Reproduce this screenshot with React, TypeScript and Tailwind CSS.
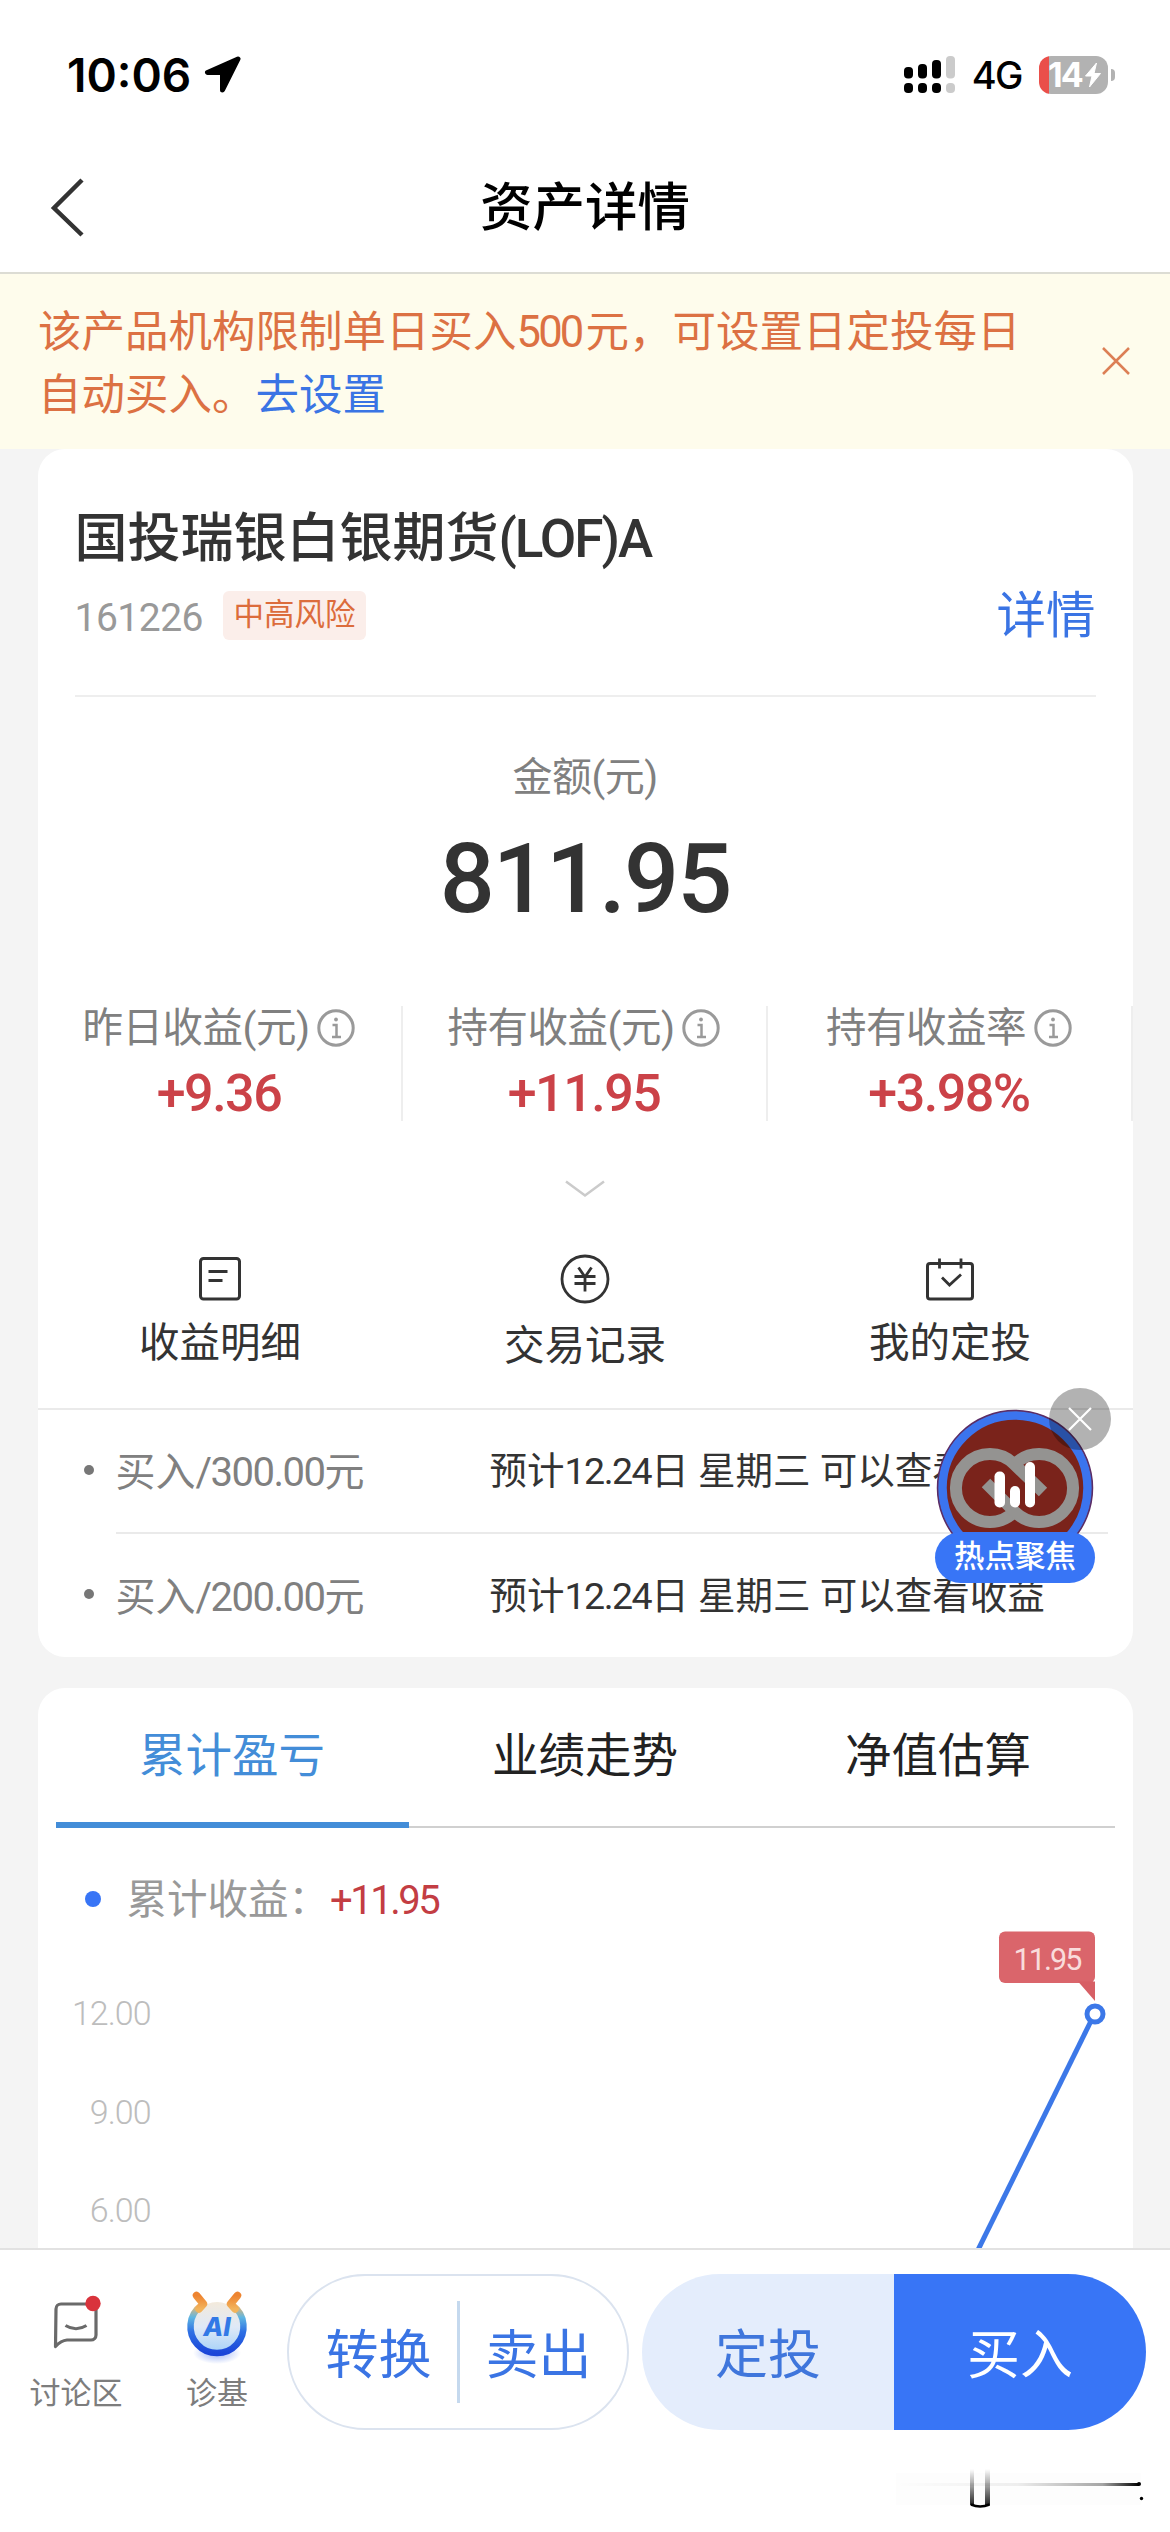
import React from 'react';

const stats = [
  { label: '昨日收益(元)', value: '+9.36' },
  { label: '持有收益(元)', value: '+11.95' },
  { label: '持有收益率', value: '+3.98%' },
];

const orders = [
  { amount: '300.00', date: '12.24' },
  { amount: '200.00', date: '12.24' },
];

const tabs = ['累计盈亏', '业绩走势', '净值估算'];

const LocationIcon = () => (
  <svg width="38" height="38" viewBox="0 0 38 38" className="ml-[13px]">
    <path d="M34 3 L3.500 16.500 H18.500 V34 Z" fill="#000" stroke="#000" strokeWidth="5" strokeLinejoin="round" />
  </svg>
);

const SignalIcon = () => (
  <svg width="52" height="38" viewBox="0 0 52 38">
    <rect x="0" y="11" width="9" height="11.500" rx="4" />
    <rect x="14" y="8" width="9" height="14.500" rx="4" />
    <rect x="28" y="4" width="9" height="18.500" rx="4" />
    <rect x="42" y="0" width="9" height="22.500" rx="4" fill="#cbcbcb" />
    <rect x="0" y="27" width="9" height="10" rx="4" />
    <rect x="14" y="27" width="9" height="10" rx="4" />
    <rect x="28" y="27" width="9" height="10" rx="4" />
    <rect x="42" y="27" width="9" height="10" rx="4" fill="#cbcbcb" />
  </svg>
);

const Battery = () => (
  <div className="flex items-center">
    <div className="relative flex h-[38px] w-[69px] items-center rounded-[12px] bg-[linear-gradient(to_right,#ea4f4a_10px,#b2b2b2_10px)] pl-[9px]">
      <span className="text-[34px] leading-[38px] font-bold tracking-[-2px] text-white">14</span>
      <svg width="18" height="26" viewBox="0 0 18 26" className="ml-[2px] shrink-0">
        <path d="M12.500 1 L1.500 14 H8 L5.500 25 L16.500 11.500 H10 Z" fill="#fff" stroke="#fff" strokeWidth="1" strokeLinejoin="round" />
      </svg>
    </div>
    <span className="ml-[3px] h-[12px] w-[4px] rounded-r-full bg-[#b2b2b2]" />
  </div>
);

const InfoIcon = () => (
  <svg width="38" height="38" viewBox="0 0 38 38" fill="none" stroke="#9a9a9a">
    <circle cx="19" cy="19" r="17.200" strokeWidth="3" />
    <path d="M15.500 16 H19.500 V27.500 M15 28 H24" strokeWidth="2.500" />
    <circle cx="19" cy="10.500" r="1.900" fill="#9a9a9a" stroke="none" />
  </svg>
);

const DetailIcon = () => (
  <svg width="50" height="50" viewBox="0 0 50 50" fill="none" stroke="#333" strokeWidth="3">
    <rect x="5.500" y="4.500" width="39" height="40.500" rx="3" />
    <path d="M13.500 17.500 H32.500 M13.500 26.500 H27.500" />
  </svg>
);

const YuanIcon = () => (
  <svg width="50" height="50" viewBox="0 0 50 50" fill="none" stroke="#333" strokeWidth="2.800">
    <circle cx="25" cy="25" r="23" />
    <path d="M18.500 13.500 L25 23 L31.500 13.500 M25 23 V37.500 M14.500 22.500 H35.500 M14.500 29.500 H35.500" />
  </svg>
);

const PlanIcon = () => (
  <svg width="50" height="50" viewBox="0 0 50 50" fill="none" stroke="#333" strokeWidth="3">
    <rect x="2.500" y="9.500" width="45" height="35.500" rx="2.500" />
    <path d="M14.500 4.500 V14.500 M36 4.500 V14.500 M17 23.500 L24.500 31 L36 20.500" strokeWidth="2.800" />
  </svg>
);

const actions = [
  { label: '收益明细', Icon: DetailIcon, gap: 'mt-[12px]' },
  { label: '交易记录', Icon: YuanIcon, gap: 'mt-[15px]' },
  { label: '我的定投', Icon: PlanIcon, gap: 'mt-[12px]' },
];

/** 悬浮的「热点聚焦」入口，右上角带关闭按钮 */
const HotFloat = () => (
  <div className="absolute top-[1388px] left-[935px] h-[196px] w-[177px]">
    <svg width="160" height="160" viewBox="0 0 160 160" className="absolute top-[20px] left-0">
      <circle cx="80" cy="80" r="77.500" fill="#7a231b" stroke="#5b2c66" strokeWidth="1.500" />
      <circle cx="80" cy="80" r="72.500" fill="none" stroke="#3b74ee" strokeWidth="8.500" />
      <g fill="none" stroke="#949391" strokeWidth="12">
        <path d="M79 104 A34 34 0 1 1 79 56 L108 84" />
        <path d="M80 56 A34 34 0 1 1 80 104 L51 75" />
      </g>
      <g fill="#fff">
        <rect x="59.500" y="63.500" width="10.500" height="36" rx="5" />
        <rect x="75" y="78" width="10" height="21.500" rx="5" />
        <rect x="90" y="54" width="10" height="45.500" rx="5" />
      </g>
    </svg>
    <div className="absolute top-[144px] left-0 flex h-[51px] w-[160px] items-center justify-center rounded-full bg-[#3875f6] text-[30.5px] leading-none font-medium text-white">
      热点聚焦
    </div>
    <div className="absolute top-0 left-[114px] flex size-[62px] items-center justify-center rounded-full bg-black/30">
      <svg width="24" height="24" viewBox="0 0 24 24" stroke="#fff" strokeWidth="2.200">
        <path d="M1 1 L23 23 M23 1 L1 23" />
      </svg>
    </div>
  </div>
);

const CommentIcon = () => (
  <svg width="56" height="60" viewBox="0 0 56 60" fill="none" stroke="#6a6a6a" strokeWidth="3.200">
    <path d="M8 17 a5 5 0 0 1 5 -5 H43 a5 5 0 0 1 5 5 V43 a5 5 0 0 1 -5 5 H19 Q13 48.500 7.500 54.500 Z" strokeLinejoin="round" />
    <path d="M17.500 33.500 Q28 40 38.500 33.500" />
    <circle cx="45" cy="11.500" r="7.700" fill="#d9333c" stroke="none" />
  </svg>
);

const AiIcon = () => (
  <svg width="66" height="76" viewBox="0 0 66 76">
    <defs>
      <linearGradient id="aiRing" x1="0" y1="0" x2="0" y2="1">
        <stop offset="0" stopColor="#f0b568" />
        <stop offset=".25" stopColor="#5fb6e2" />
        <stop offset=".55" stopColor="#2e70e4" />
        <stop offset="1" stopColor="#1b45d8" />
      </linearGradient>
      <linearGradient id="aiHorn" x1="0" y1="0" x2="0" y2="1">
        <stop offset="0" stopColor="#ee8430" />
        <stop offset="1" stopColor="#f2b45c" />
      </linearGradient>
      <linearGradient id="aiFace" x1="0" y1="0" x2="0" y2="1">
        <stop offset="0" stopColor="#f3eadc" />
        <stop offset=".5" stopColor="#dfe9f7" />
        <stop offset="1" stopColor="#a8d2f8" />
      </linearGradient>
      <radialGradient id="aiShadow">
        <stop offset="0" stopColor="#9db4f5" />
        <stop offset="1" stopColor="#9db4f5" stopOpacity="0" />
      </radialGradient>
    </defs>
    <ellipse cx="33" cy="64" rx="24" ry="11" fill="url(#aiShadow)" />
    <circle cx="33" cy="38" r="25" fill="url(#aiFace)" />
    <path d="M17 16.500 A26.500 26.500 0 1 0 49 16.500" fill="none" stroke="url(#aiRing)" strokeWidth="6.500" />
    <path d="M12.500 6.500 L19.500 15 L15 20 M53.500 6.500 L46.500 15 L51 20" fill="none" stroke="url(#aiHorn)" strokeWidth="7.500" strokeLinecap="round" strokeLinejoin="round" />
    <text x="33" y="46.500" textAnchor="middle" fontSize="26" fontWeight="800" fontStyle="italic" fill="#3279e6" className="font-['Inter',sans-serif]">AI</text>
  </svg>
);

const StatusBar = () => (
  <div className="flex h-[150px] items-center justify-between pr-[55px] pl-[67px] font-['Inter',sans-serif] text-black">
    <div className="flex items-center">
      <span className="text-[46px] leading-none font-semibold">10:06</span>
      <LocationIcon />
    </div>
    <div className="flex items-center">
      <SignalIcon />
      <span className="mr-[17px] ml-[16px] text-[38px] leading-none font-medium tracking-[-1.500px]">4G</span>
      <Battery />
    </div>
  </div>
);

const Header = () => (
  <div className="grid h-[124px] grid-cols-[200px_1fr_200px] items-center border-b-2 border-[#dcdcd4] pb-[8px]">
    <svg width="36" height="60" viewBox="0 0 36 60" className="ml-[49px]" fill="none" stroke="#333" strokeWidth="4.500">
      <path d="M33 3 L5 31 L33 58" />
    </svg>
    <h1 className="pt-[3px] text-center text-[52.500px] leading-none font-medium text-black">资产详情</h1>
  </div>
);

const Notice = () => (
  <div className="flex h-[175px] justify-between bg-[#fefcec] pt-[27px] pr-[40px] pl-[38px] text-[43.5px] leading-[63px] text-[#dc7143]">
    <p>
      该产品机构限制单日买入<span className="mr-[4px] tracking-[-2.8px]">500</span>元，可设置日定投每日
      <br />
      自动买入。<span className="text-[#3a74e4]">去设置</span>
    </p>
    <svg width="28" height="28" viewBox="0 0 28 28" className="mt-[46px]" stroke="#dc7f55" strokeWidth="2.500">
      <path d="M1 1 L27 27 M27 1 L1 27" />
    </svg>
  </div>
);

const AssetCard = () => (
  <section className="mx-[37.500px] h-[1208px] rounded-[27px] bg-white">
    <div className="mx-[37px] h-[248px] border-b-2 border-[#eeeeee] pt-[60px]">
      <h2 className="text-[53px] leading-[60px] font-medium text-[#333]">
        国投瑞银白银期货<span className="tracking-[-2px]">(LOF)A</span>
      </h2>
      <div className="mt-[18px] flex h-[60px] items-center">
        <span className="pt-[2px] text-[39px] leading-none tracking-[-0.5px] text-[#999]">161226</span>
        <span className="mb-[3px] ml-[20px] flex h-[49px] w-[143px] items-center justify-center rounded-[6px] bg-[#fbeeea] text-[30.500px] leading-none text-[#dc6c3c]">
          中高风险
        </span>
        <span className="ml-auto text-[49.500px] leading-none text-[#3a74e4]">详情</span>
      </div>
    </div>

    <div className="flex h-[309px] flex-col items-center">
      <span className="mt-[60px] text-[40px] leading-[42px] tracking-[-0.500px] text-[#808080]">金额(元)</span>
      <span className="mt-[30px] text-[97px] leading-[100px] font-medium tracking-[-2px] text-[#333]">811.95</span>
    </div>

    <div className="grid h-[112px] grid-cols-3">
      {stats.map((s) => (
        <div key={s.label} className="flex flex-col items-center border-r-2 border-[#eeeeee]">
          <div className="flex h-[44px] items-center gap-[8px] text-[40.500px] leading-none tracking-[-0.500px] text-[#808080]">
            {s.label}
            <InfoIcon />
          </div>
          <span className="mt-[17px] text-[52px] leading-[54px] font-medium tracking-[-1.5px] text-[#cb4248]">{s.value}</span>
        </div>
      ))}
    </div>

    <div className="flex justify-center pt-[62px]">
      <svg width="40" height="18" viewBox="0 0 40 18" fill="none" stroke="#cbcbcb" strokeWidth="2.500">
        <path d="M1 1.500 L20 15.500 L39 1.500" />
      </svg>
    </div>

    <div className="grid h-[212px] grid-cols-3 border-b-2 border-[#eaeaea] pt-[56px]">
      {actions.map(({ label, Icon, gap }) => (
        <div key={label} className="flex flex-col items-center text-[40.500px] leading-[54px] text-[#333]">
          <Icon />
          <span className={gap}>{label}</span>
        </div>
      ))}
    </div>

    {orders.map((o, i) => (
      <div key={o.amount} className="flex h-[124px] items-center pl-[46px]">
        <span className="mb-[4px] size-[10px] rounded-full bg-[#777]" />
        <div className={`ml-[22px] flex h-full flex-1 items-center ${i === 0 ? 'mr-[25px] border-b-2 border-[#eaeaea]' : ''}`}>
          <span className="w-[374px] pt-[4px] text-[40px] leading-none text-[#808080]">
            买入<span className="tracking-[-1.500px]">/{o.amount}</span>元
          </span>
          <span className="pt-[2px] text-[37.500px] leading-none whitespace-nowrap text-[#333]">
            预计<span className="tracking-[-1.500px]">{o.date}</span>日 星期三 可以查看收益
          </span>
        </div>
      </div>
    ))}
  </section>
);

const ChartCard = () => (
  <section className="mx-[37.500px] mt-[31px] h-[560px] overflow-hidden rounded-t-[27px] bg-white">
    <div className="mx-[18px] grid h-[140px] grid-cols-3 border-b-2 border-[#d0d0d0]">
      {tabs.map((t, i) => (
        <div
          key={t}
          className={`-mb-[2px] flex items-center justify-center pt-[3px] text-[46.500px] leading-none ${
            i === 0 ? 'border-b-[6px] border-[#438dd8] text-[#438dd8]' : 'border-b-[6px] border-transparent text-[#222]'
          }`}
        >
          {t}
        </div>
      ))}
    </div>

    <div className="flex h-[142px] items-center pl-[47px] text-[40.500px] leading-none">
      <span className="size-[16px] rounded-full bg-[#3875f6]" />
      <span className="ml-[26px] pt-[3px] text-[#999]">累计收益：</span>
      <span className="ml-[1px] pt-[4px] text-[40px] tracking-[-2.500px] text-[#c33d43]">+11.95</span>
    </div>

    {/* Y 轴刻度与曲线 */}
    <div className="-mt-[42px] flex h-[320px]">
      <div className="flex w-[113px] flex-col pt-[36px] text-right text-[34px] leading-[98.500px] font-light tracking-[-1px] text-[#bdbdbd]">
        <span>12.00</span>
        <span>9.00</span>
        <span>6.00</span>
      </div>
      <svg width="982" height="320" viewBox="0 0 982 320">
        <rect x="848" y="3.500" width="96" height="51.500" rx="6" fill="#da656b" />
        <path d="M927 53.500 H944 V73 Z" fill="#d75f65" />
        <text x="896" y="41.500" textAnchor="middle" fontSize="30.500" fill="#f9dcdc" letterSpacing="-1.900">11.95</text>
        <path d="M939.500 94 L824 328" stroke="#3c78e8" strokeWidth="5" />
        <circle cx="944" cy="86" r="8" fill="#fff" stroke="#3c78e8" strokeWidth="5" />
      </svg>
    </div>
  </section>
);

/** 底部右侧残留的拖影线条 */
const Smear = () => (
  <svg width="250" height="42" viewBox="0 0 250 42">
    <defs>
      <linearGradient id="fadeY" x1="0" y1="0" x2="0" y2="1">
        <stop offset="0" stopColor="#000" stopOpacity="0" />
        <stop offset=".5" stopColor="#000" stopOpacity=".4" />
        <stop offset="1" stopColor="#000" stopOpacity=".85" />
      </linearGradient>
      <linearGradient id="fadeX" x1="0" y1="0" x2="1" y2="0">
        <stop offset="0" stopColor="#000" stopOpacity="0" />
        <stop offset=".5" stopColor="#000" stopOpacity=".06" />
        <stop offset=".85" stopColor="#000" stopOpacity=".35" />
        <stop offset="1" stopColor="#000" />
      </linearGradient>
    </defs>
    <rect x="0" y="4" width="245" height="32" fill="#fdfdfd" />
    <rect x="74" y="0" width="4" height="36" fill="url(#fadeY)" />
    <rect x="89" y="0" width="5" height="36" fill="url(#fadeY)" />
    <path d="M75 35.500 Q84 39.500 93.500 35.500" fill="none" stroke="#000" strokeWidth="2.500" />
    <rect x="0" y="14" width="243" height="3" fill="url(#fadeX)" />
    <circle cx="243" cy="15" r="2" />
    <circle cx="245.500" cy="29.500" r="1.700" />
  </svg>
);

const BottomBar = () => (
  <footer className="h-[284px] border-t-2 border-[#e2e2e2] bg-white pt-[24px] pr-[24px]">
    <div className="flex h-[156px]">
      <div className="flex w-[152px] flex-col items-center pt-[18px] text-[31px] leading-[36px] text-[#7d7d7d]">
        <CommentIcon />
        <span className="mt-[24px]">讨论区</span>
      </div>
      <div className="flex w-[130px] flex-col items-center pt-[15px] text-[31px] leading-[36px] text-[#7d7d7d]">
        <AiIcon />
        <span className="mt-[11px]">诊基</span>
      </div>
      <div className="ml-[5px] flex w-[342px] items-center rounded-full border-2 border-[#dbe3ef] text-[53px] leading-none text-[#3a74e4]">
        <span className="w-[168px] pt-[8px] pl-[11px] text-center">转换</span>
        <span className="h-[102px] w-[3px] bg-[#c5d9ee]" />
        <span className="w-[157px] pt-[8px] text-center">卖出</span>
      </div>
      <div className="ml-[13px] flex flex-1 overflow-hidden rounded-full text-[53px] leading-none">
        <div className="flex flex-1 items-center justify-center bg-[#e4edfc] pt-[8px] text-[#3f76dc]">定投</div>
        <div className="flex flex-1 items-center justify-center bg-[#3875f6] pt-[8px] text-white">买入</div>
      </div>
    </div>
    <div className="mt-[39px] flex justify-end">
      <Smear />
    </div>
  </footer>
);

export default function App() {
  return (
    <div className="relative h-[2532px] w-[1170px] overflow-hidden bg-[#f4f4f4] font-['Roboto','Noto_Sans_CJK_SC',sans-serif]">
      <div className="bg-white">
        <StatusBar />
        <Header />
      </div>
      <Notice />
      <AssetCard />
      <ChartCard />
      <BottomBar />
      <HotFloat />
    </div>
  );
}
